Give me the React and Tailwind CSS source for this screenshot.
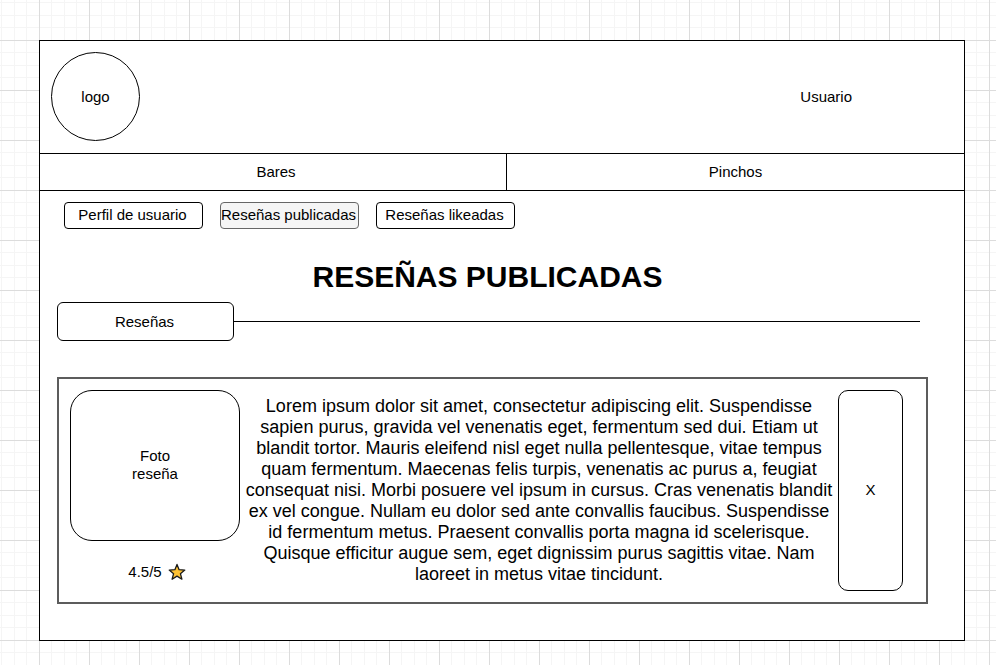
const review =
  "Lorem ipsum dolor sit amet, consectetur adipiscing elit. Suspendisse sapien purus, gravida vel venenatis eget, fermentum sed dui. Etiam ut blandit tortor. Mauris eleifend nisl eget nulla pellentesque, vitae tempus quam fermentum. Maecenas felis turpis, venenatis ac purus a, feugiat consequat nisi. Morbi posuere vel ipsum in cursus. Cras venenatis blandit ex vel congue. Nullam eu dolor sed ante convallis faucibus. Suspendisse id fermentum metus. Praesent convallis porta magna id scelerisque. Quisque efficitur augue sem, eget dignissim purus sagittis vitae. Nam laoreet in metus vitae tincidunt.";

function Header() {
  return (
    <header className="flex items-center justify-between border-b border-black pb-3 pl-[11px] pr-28 pt-[11px]">
      <div className="flex h-[89px] w-[89px] items-center justify-center rounded-full border border-black">
        logo
      </div>
      <a href="#usuario">Usuario</a>
    </header>
  );
}

function MainNav() {
  return (
    <nav className="grid grid-cols-[468fr_458fr] border-b border-black text-center">
      <a href="#bares" className="border-r border-black py-[9px] pl-1.5">Bares</a>
      <a href="#pinchos" className="py-[9px]">Pinchos</a>
    </nav>
  );
}

function Tab({ children, active }) {
  return (
    <button
      type="button"
      aria-pressed={!!active}
      className={
        "flex h-[27px] w-[139px] items-center justify-center whitespace-nowrap rounded border pb-0.5 pr-0.5 " +
        (active ? "border-[#666666] bg-[#f5f5f5]" : "border-black bg-white")
      }
    >
      {children}
    </button>
  );
}

function Star() {
  return (
    <svg viewBox="0 0 18 18" className="h-[18px] w-[18px]" aria-hidden="true">
      <path
        d="M9 1.4 L11.1 6.7 L16.8 7.1 L12.4 10.7 L13.9 16.2 L9 13.1 L4.1 16.2 L5.6 10.7 L1.2 7.1 L6.9 6.7 Z"
        fill="#ffc233"
        stroke="#1a1a1a"
        strokeWidth="1.3"
        strokeLinejoin="round"
      />
    </svg>
  );
}

function ReviewCard() {
  return (
    <article className="mt-9 flex border-2 border-[#5c5c5c] py-[11px] pl-[11px] pr-[23px]">
      <div className="flex w-[170px] shrink-0 flex-col">
        <div className="flex h-[151px] items-center justify-center rounded-[22px] border border-black pb-0.5 text-center">
          Foto
          <br />
          reseña
        </div>
        <div className="mt-[22px] flex items-center justify-center gap-1.5 pl-1">
          4.5/5 <Star />
        </div>
      </div>
      <p className="min-w-0 flex-1 self-start px-1 pt-1.5 text-center text-[18px] leading-[21px]">{review}</p>
      <button
        type="button"
        className="flex h-[201px] w-[65px] shrink-0 items-center justify-center rounded-[10px] border border-black pb-0.5"
      >
        X
      </button>
    </article>
  );
}

export default function App() {
  return (
    <div className="min-h-screen bg-white bg-[linear-gradient(to_right,#dcdcdc_1px,transparent_1px),linear-gradient(to_bottom,#dcdcdc_1px,transparent_1px),linear-gradient(to_right,transparent_12px,#f5f5f5_12px,#f5f5f5_13px,transparent_13px,transparent_25px,#f5f5f5_25px,#f5f5f5_26px,transparent_26px,transparent_37px,#f5f5f5_37px,#f5f5f5_38px,transparent_38px),linear-gradient(to_bottom,transparent_12px,#f5f5f5_12px,#f5f5f5_13px,transparent_13px,transparent_25px,#f5f5f5_25px,#f5f5f5_26px,transparent_26px,transparent_37px,#f5f5f5_37px,#f5f5f5_38px,transparent_38px)] bg-[size:50px_50px] bg-[position:39px_40px] pb-6 pl-[39px] pr-[31px] pt-10 font-['Liberation_Sans',Arial,sans-serif] text-[15px] leading-[18px] text-black">
      <div className="border border-black bg-white">
        <Header />
        <MainNav />
        <main className="pb-9 pl-[17px] pr-9 pt-[11px]">
          <div className="flex gap-[17px] pl-[7px]">
            <Tab>Perfil de usuario</Tab>
            <Tab active>Reseñas publicadas</Tab>
            <Tab>Reseñas likeadas</Tab>
          </div>
          <h1 className="mt-[30px] pr-2.5 text-center text-[30px] font-bold leading-9">RESEÑAS PUBLICADAS</h1>
          <div className="mt-[7px] flex items-center pr-2">
            <h2 className="flex h-[39px] w-[177px] items-center justify-center rounded-md border border-black pr-0.5">
              Reseñas
            </h2>
            <div className="h-px flex-1 bg-black" />
          </div>
          <ReviewCard />
        </main>
      </div>
    </div>
  );
}
